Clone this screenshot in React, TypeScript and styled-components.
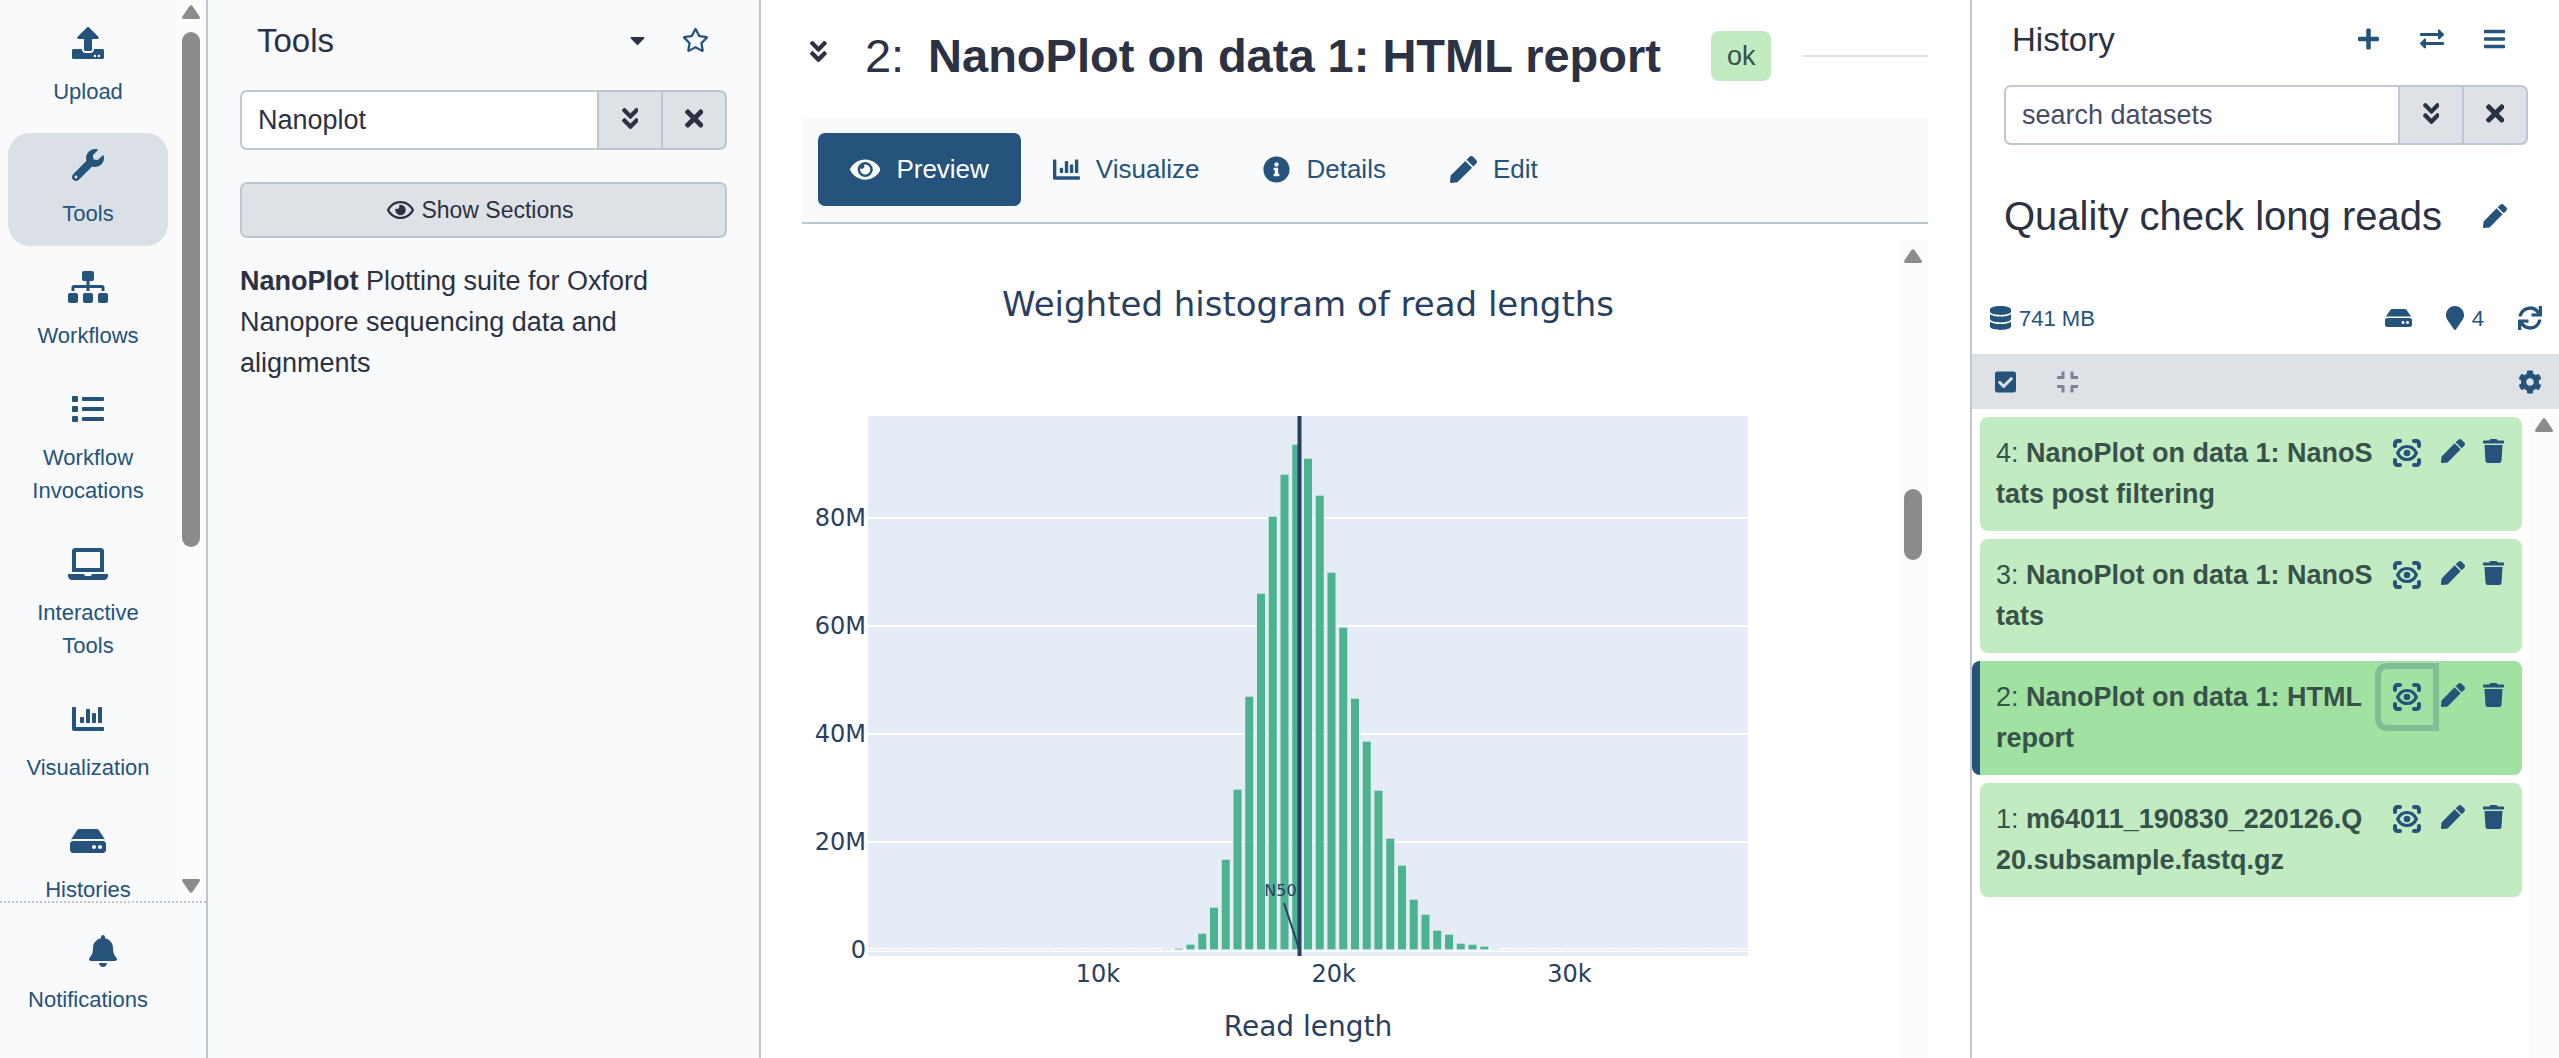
import React from "react";
import styled, { createGlobalStyle, css } from "styled-components";
import {
  FaAngleDoubleDown,
  FaBars,
  FaBell,
  FaCaretDown,
  FaChartBar,
  FaCheckSquare,
  FaCog,
  FaCompress,
  FaDatabase,
  FaExchangeAlt,
  FaEye,
  FaHdd,
  FaInfoCircle,
  FaLaptop,
  FaList,
  FaMapMarker,
  FaPen,
  FaPlus,
  FaRegEye,
  FaRegStar,
  FaSitemap,
  FaSync,
  FaTimes,
  FaTrash,
  FaUpload,
  FaWrench,
} from "react-icons/fa";

const color = {
  primary: "#25537b",
  text: "#2c3143",
  muted: "#454d6b",
  disabled: "#7b8299",
  panel: "#f8fafc",
  border: "#bdc6d1",
  grey: "#dee2e6",
  activeItem: "#dbe0e7",
  ok: "#c2ebc2",
  okActive: "#a1e1a1",
  okText: "#38524b",
  thumb: "#8b8b8b",
  track: "#fcfcfc",
  plot: "#e5ecf6",
  plotInk: "#2a3f5f",
  bar: "#4cb391",
};

const GlobalStyle = createGlobalStyle`
  *, *::before, *::after { box-sizing: border-box; }
  body {
    margin: 0;
    background: #fff;
    color: ${color.text};
    font-family: "Liberation Sans", Arial, sans-serif;
    font-size: 27px;
    line-height: 41px;
  }
  h1, h2, h3, p, ul, ol { margin: 0; padding: 0; font-weight: 400; }
  ul, ol { list-style: none; }
  button, input { font: inherit; color: inherit; }
  button { border: 0; background: none; padding: 0; cursor: pointer; }
  a { color: inherit; text-decoration: none; }
`;

/* $units is the width of the glyph's drawing on its 512-unit-high grid */
const Glyph = styled.span<{ $size?: number; $units?: number }>`
  display: inline-flex;
  flex: none;
  font-size: ${(p) => p.$size ?? 24}px;
  line-height: 1;
  svg {
    width: ${(p) => (p.$units ?? 512) / 512}em;
    height: 1em;
  }
`;

const Shell = styled.div`
  display: grid;
  grid-template-columns: 208px 553px minmax(0, 1fr) 589px;
  grid-template-rows: minmax(0, 1fr);
  height: 100vh;
  overflow: hidden;
`;

/* ---------- scroll bars ---------- */

const Track = styled.div<{ $top: number }>`
  display: flex;
  flex-direction: column;
  align-items: center;
  flex: none;
  width: 30px;
  padding: ${(p) => p.$top}px 0 8px;
  background: ${color.track};
`;

const Thumb = styled.div<{ $offset: number; $length: number }>`
  width: 18px;
  height: ${(p) => p.$length}px;
  margin-top: ${(p) => p.$offset}px;
  border-radius: 9px;
  background: ${color.thumb};
`;

const ArrowSvg = styled.svg<{ $down?: boolean }>`
  flex: none;
  width: 18px;
  height: 14px;
  ${(p) =>
    p.$down &&
    css`
      margin-top: auto;
      transform: rotate(180deg);
    `}
`;

const Arrow = ({ down }: { down?: boolean }) => (
  <ArrowSvg viewBox="0 0 18 14" $down={down} aria-hidden="true">
    <path
      d="M7.4 1.2Q9-.8 10.6 1.2L17.6 11.4Q18.6 14 16.4 14H1.6Q-.6 14 .4 11.4Z"
      fill={color.thumb}
    />
  </ArrowSvg>
);

/* ---------- activity bar ---------- */

const ActivityBar = styled.nav`
  display: flex;
  flex-direction: column;
  min-height: 0;
  background: ${color.panel};
  border-right: 2px solid ${color.border};
`;

const ActivityScroll = styled.div`
  display: flex;
  flex: 1;
  min-height: 0;
  overflow: hidden;
`;

const ActivityList = styled.ul`
  display: flex;
  flex: 1;
  flex-direction: column;
  gap: 9px;
  min-width: 0;
  padding: 11px 8px 0;
`;

const Activity = styled.button<{ $active?: boolean }>`
  display: flex;
  flex-direction: column;
  align-items: center;
  gap: 16px;
  width: 100%;
  padding: 16px 12px;
  border-radius: 22px;
  background: ${(p) => (p.$active ? color.activeItem : "transparent")};
  color: ${color.primary};
  font-size: 22px;
  line-height: 33px;
`;

const ActivityFooter = styled.div`
  display: flex;
  flex: none;
  flex-direction: column;
  height: 157px;
  padding-top: 16px;
  border-top: 2px dotted ${color.border};
`;

const FooterActivity = styled(Activity)`
  padding: 16px 0;
`;

const FooterLabel = styled.span`
  align-self: flex-start;
  width: 176px;
  text-align: center;
`;

const activities = [
  { label: "Upload", icon: <FaUpload />, units: 512 },
  { label: "Tools", icon: <FaWrench />, units: 512, active: true },
  { label: "Workflows", icon: <FaSitemap />, units: 640 },
  { label: "Workflow Invocations", icon: <FaList />, units: 512 },
  { label: "Interactive Tools", icon: <FaLaptop />, units: 640 },
  { label: "Visualization", icon: <FaChartBar />, units: 512 },
  { label: "Histories", icon: <FaHdd />, units: 576 },
];

/* ---------- shared panel parts ---------- */

const PanelHeader = styled.header<{ $height: number }>`
  display: flex;
  align-items: center;
  height: ${(p) => p.$height}px;
`;

const PanelHeading = styled.h2`
  flex: 1;
  font-size: 33px;
`;

const IconButton = styled.button<{ $width: number; $tone?: string }>`
  display: flex;
  align-items: center;
  justify-content: center;
  width: ${(p) => p.$width}px;
  height: 56px;
  color: ${(p) => p.$tone ?? color.primary};
`;

const SearchGroup = styled.div`
  display: flex;
  height: 60px;
  border: 2px solid ${color.border};
  border-radius: 7px;
  background: ${color.grey};
  overflow: hidden;
`;

const SearchInput = styled.input`
  flex: 1;
  min-width: 0;
  padding: 0 16px;
  border: 0;
  outline: 0;
  background: #fff;
  &::placeholder {
    color: ${color.muted};
    opacity: 1;
  }
`;

const SearchButton = styled.button`
  display: flex;
  align-items: center;
  justify-content: center;
  width: 64px;
  border-left: 2px solid ${color.border};
  padding-bottom: 4px;
`;

const SearchBox = (props: {
  label: string;
  value?: string;
  placeholder?: string;
}) => (
  <SearchGroup role="search">
    <SearchInput
      type="text"
      aria-label={props.label}
      defaultValue={props.value}
      placeholder={props.placeholder}
    />
    <SearchButton aria-label="Advanced search">
      <Glyph $size={27} $units={320}>
        <FaAngleDoubleDown />
      </Glyph>
    </SearchButton>
    <SearchButton aria-label="Clear search">
      <Glyph $size={27} $units={352}>
        <FaTimes />
      </Glyph>
    </SearchButton>
  </SearchGroup>
);

/* ---------- tool panel ---------- */

const ToolPanel = styled.aside`
  padding: 0 32px;
  background: ${color.panel};
  border-right: 2px solid ${color.border};
`;

const ToolHeader = styled(PanelHeader)`
  padding: 0 3px 0 17px;
  margin-bottom: 10px;
`;

const SectionsButton = styled.button`
  display: flex;
  align-items: center;
  justify-content: center;
  gap: 7px;
  width: 100%;
  height: 56px;
  margin-top: 32px;
  padding-right: 6px;
  border: 2px solid ${color.border};
  border-radius: 7px;
  background: ${color.grey};
  font-size: 23px;
`;

const ToolResult = styled.a`
  display: block;
  margin-top: 23px;
`;

/* ---------- centre ---------- */

const Center = styled.main`
  display: flex;
  flex-direction: column;
  min-width: 0;
  padding: 0 42px 0 41px;
`;

const DatasetHeader = styled.header`
  display: flex;
  align-items: center;
  height: 112px;
  margin-bottom: 5px;
  padding-left: 8px;
`;

const DatasetTitle = styled.h1`
  display: flex;
  gap: 24px;
  margin: 0 50px 0 38px;
  font-size: 47px;
  line-height: 56px;
  white-space: nowrap;
`;

const StateBadge = styled.span`
  padding: 5px 16px;
  height: 50px;
  border-radius: 8px;
  background: ${color.ok};
  color: ${color.okText};
`;

const Rule = styled.span`
  flex: 1;
  height: 2px;
  margin-left: 32px;
  background: ${color.grey};
`;

const Tabs = styled.nav`
  display: flex;
  padding: 16px;
  background: ${color.panel};
  border-bottom: 2px solid ${color.border};
`;

const Tab = styled.a<{ $active?: boolean }>`
  display: flex;
  align-items: center;
  gap: 16px;
  height: 73px;
  padding: 0 32px;
  border-radius: 7px;
  font-size: 26px;
  background: ${(p) => (p.$active ? color.primary : "transparent")};
  color: ${(p) => (p.$active ? "#fff" : color.primary)};
`;

const Report = styled.section`
  display: flex;
  flex: 1;
  min-height: 0;
  margin-top: 16px;
  overflow: hidden;
`;

const ReportBody = styled.div`
  flex: 1;
  min-width: 0;
  overflow: hidden;
`;

const ChartText = styled.text`
  fill: ${color.plotInk};
  font-family: "DejaVu Sans", Verdana, sans-serif;
`;

const plot = { left: 66, right: 946, top: 176, bottom: 716, zero: 710 };
const perMega = 5.4;
const xOf = (k: number) => 296 + (k - 10) * 23.57;

const firstBin = 25;
const binHeights = [
  1, 2, 6, 17, 43, 91, 161, 254, 357, 434, 476, 506, 492, 455, 378, 323, 252,
  209, 160, 112, 85, 51, 36, 20, 16, 7, 6, 4, 1,
];
const bins = Array.from({ length: 75 }, (_, i) => ({
  x: 360.3 + (i - firstBin) * 11.75,
  h: binHeights[i - firstBin] ?? 0,
}));

const Histogram = () => (
  <svg width="1096" height="818" viewBox="0 0 1096 818" role="img" aria-label="Weighted histogram of read lengths">
    <ChartText x="506" y="76" fontSize="34" textAnchor="middle">
      Weighted histogram of read lengths
    </ChartText>
    <rect
      x={plot.left}
      y={plot.top}
      width={plot.right - plot.left}
      height={plot.bottom - plot.top}
      fill={color.plot}
    />
    {[20, 40, 60, 80].map((m) => (
      <rect
        key={m}
        x={plot.left}
        y={Math.round(plot.zero - m * perMega) - 1}
        width={plot.right - plot.left}
        height="2"
        fill="#fff"
      />
    ))}
    <rect x={plot.left} y={plot.zero - 2} width={plot.right - plot.left} height="4" fill="#fff" />
    <svg x={plot.left} y={plot.top} width={880} height={540} viewBox={`${plot.left} ${plot.top} 880 540`}>
      {bins.map((b) => (
        <rect
          key={b.x}
          x={b.x}
          y={plot.zero - b.h}
          width="9.4"
          height={Math.max(b.h, 0.1)}
          fill={color.bar}
          fillOpacity={b.h ? 1 : 0}
          stroke={color.plot}
          strokeWidth="1.4"
        />
      ))}
      <rect x="495.5" y={plot.top} width="4" height="540" fill={color.plotInk} />
      <path d="M482 663L497.5 710" stroke={color.plotInk} strokeWidth="2" />
    </svg>
    <ChartText x="478.5" y="656" fontSize="16" textAnchor="middle">
      N50
    </ChartText>
    {[0, 20, 40, 60, 80].map((m) => (
      <ChartText key={m} x="64" y={plot.zero - m * perMega + 8} fontSize="24" textAnchor="end">
        {m ? `${m}M` : "0"}
      </ChartText>
    ))}
    {[10, 20, 30].map((k) => (
      <ChartText key={k} x={xOf(k)} y="742" fontSize="24" textAnchor="middle">
        {k}k
      </ChartText>
    ))}
    <ChartText x="506" y="796" fontSize="28" textAnchor="middle">
      Read length
    </ChartText>
  </svg>
);

/* ---------- history panel ---------- */

const HistoryPanel = styled.aside`
  display: flex;
  flex-direction: column;
  min-height: 0;
  border-left: 2px solid ${color.border};
  background: #fff;
`;

const HistoryTop = styled.div`
  padding: 0 31px 0 32px;
`;

const HistoryHeader = styled(PanelHeader)`
  padding: 0 2px 0 8px;
  margin-bottom: 7px;
`;

const HistoryTitle = styled.div`
  display: flex;
  align-items: center;
  justify-content: space-between;
  height: 60px;
  margin: 41px 0 36px;
`;

const HistoryName = styled.h3`
  font-size: 40px;
  line-height: 60px;
`;

const Stats = styled.div`
  display: flex;
  align-items: center;
  height: 72px;
  padding: 0 17px 0 18px;
  font-size: 22px;
`;

const Stat = styled.button`
  display: flex;
  align-items: center;
  gap: 8px;
  color: ${color.primary};
`;

const StatGroup = styled.div`
  display: flex;
  gap: 34px;
  margin-left: auto;
`;

const Operations = styled.div`
  display: flex;
  align-items: center;
  height: 55px;
  padding: 0 3px 0 6px;
  background: ${color.grey};
`;

const Spacer = styled.span`
  flex: 1;
`;

const HistoryBody = styled.div`
  display: flex;
  flex: 1;
  min-height: 0;
`;

const Items = styled.ol`
  display: flex;
  flex: 1;
  flex-direction: column;
  gap: 8px;
  min-width: 0;
  padding: 8px 7px 0 0;
`;

const Item = styled.li<{ $active?: boolean }>`
  display: flex;
  align-items: flex-start;
  min-height: 114px;
  padding: 8px 9px 8px 16px;
  border-radius: 8px;
  margin-left: 8px;
  background: ${color.ok};
  color: ${color.okText};
  ${(p) =>
    p.$active &&
    css`
      margin-left: 0;
      border-left: 8px solid ${color.primary};
      background: ${color.okActive};
    `}
`;

const ItemName = styled.p`
  flex: 1;
  min-width: 0;
  padding: 8px 0;
  margin-right: 5px;
  word-break: break-all;
`;

const ItemButton = styled.button<{ $wide?: boolean; $focused?: boolean }>`
  display: flex;
  align-items: center;
  justify-content: center;
  width: ${(p) => (p.$wide ? 52 : 40)}px;
  height: 56px;
  padding-bottom: ${(p) => (p.$wide ? 0 : 4)}px;
  color: ${color.primary};
  border-radius: ${(p) => (p.$wide ? "6px 0 0 6px" : "0")};
  box-shadow: ${(p) => (p.$focused ? "0 0 0 6px rgba(37, 83, 123, 0.25)" : "none")};
`;

const ScanEye = () => (
  <svg viewBox="0 0 28 28" fill="none" stroke="currentColor" strokeLinecap="round" strokeLinejoin="round">
    <path
      d="M2 7V4.5A2.5 2.5 0 0 1 4.5 2H7M21 2h2.5A2.5 2.5 0 0 1 26 4.5V7M26 21v2.5a2.5 2.5 0 0 1-2.5 2.5H21M7 26H4.5A2.5 2.5 0 0 1 2 23.5V21"
      strokeWidth="4"
    />
    <path
      d="M4.6 14C6.6 9.8 10 7.5 14 7.5S21.4 9.8 23.4 14C21.4 18.2 18 20.5 14 20.5S6.6 18.2 4.6 14Z"
      strokeWidth="3.2"
    />
    <circle cx="14" cy="14" r="3.3" fill="currentColor" stroke="none" />
  </svg>
);

const datasets = [
  { id: 4, name: "NanoPlot on data 1: NanoStats post filtering" },
  { id: 3, name: "NanoPlot on data 1: NanoStats" },
  { id: 2, name: "NanoPlot on data 1: HTML report", active: true },
  { id: 1, name: "m64011_190830_220126.Q20.subsample.fastq.gz" },
];

export default function App() {
  return (
    <>
      <GlobalStyle />
      <Shell>
        <ActivityBar aria-label="Activities">
          <ActivityScroll>
            <ActivityList>
              {activities.map((a) => (
                <li key={a.label}>
                  <Activity $active={a.active}>
                    <Glyph $size={32} $units={a.units}>
                      {a.icon}
                    </Glyph>
                    <span>{a.label}</span>
                  </Activity>
                </li>
              ))}
            </ActivityList>
            <Track $top={5}>
              <Arrow />
              <Thumb $offset={13} $length={515} />
              <Arrow down />
            </Track>
          </ActivityScroll>
          <ActivityFooter>
            <FooterActivity>
              <Glyph $size={32} $units={448}>
                <FaBell />
              </Glyph>
              <FooterLabel>Notifications</FooterLabel>
            </FooterActivity>
          </ActivityFooter>
        </ActivityBar>

        <ToolPanel>
          <ToolHeader $height={80}>
            <PanelHeading>Tools</PanelHeading>
            <IconButton $width={58} $tone={color.text} aria-label="Panel views">
              <Glyph $units={320}>
                <FaCaretDown />
              </Glyph>
            </IconButton>
            <IconButton $width={58} aria-label="Favorites">
              <Glyph $units={576}>
                <FaRegStar />
              </Glyph>
            </IconButton>
          </ToolHeader>
          <SearchBox label="Search tools" value="Nanoplot" />
          <SectionsButton>
            <Glyph $units={576}>
              <FaRegEye />
            </Glyph>
            Show Sections
          </SectionsButton>
          <ToolResult href="#nanoplot">
            <b>NanoPlot</b> Plotting suite for Oxford Nanopore sequencing data and alignments
          </ToolResult>
        </ToolPanel>

        <Center>
          <DatasetHeader>
            <button aria-label="Expand details">
              <Glyph $size={27} $units={320}>
                <FaAngleDoubleDown />
              </Glyph>
            </button>
            <DatasetTitle>
              <span>2:</span>
              <b>NanoPlot on data 1: HTML report</b>
            </DatasetTitle>
            <StateBadge>ok</StateBadge>
            <Rule />
          </DatasetHeader>
          <Tabs>
            <Tab href="#preview" $active>
              <Glyph $size={27} $units={576}>
                <FaEye />
              </Glyph>
              Preview
            </Tab>
            <Tab href="#visualize">
              <Glyph $size={27}>
                <FaChartBar />
              </Glyph>
              Visualize
            </Tab>
            <Tab href="#details">
              <Glyph $size={27}>
                <FaInfoCircle />
              </Glyph>
              Details
            </Tab>
            <Tab href="#edit">
              <Glyph $size={27}>
                <FaPen />
              </Glyph>
              Edit
            </Tab>
          </Tabs>
          <Report>
            <ReportBody>
              <Histogram />
            </ReportBody>
            <Track $top={9}>
              <Arrow />
              <Thumb $offset={226} $length={71} />
            </Track>
          </Report>
        </Center>

        <HistoryPanel>
          <HistoryTop>
            <HistoryHeader $height={78}>
              <PanelHeading>History</PanelHeading>
              <IconButton $width={63} aria-label="Create new history">
                <Glyph $units={448}>
                  <FaPlus />
                </Glyph>
              </IconButton>
              <IconButton $width={63} aria-label="Switch to history">
                <Glyph>
                  <FaExchangeAlt />
                </Glyph>
              </IconButton>
              <IconButton $width={63} aria-label="History options">
                <Glyph $units={448}>
                  <FaBars />
                </Glyph>
              </IconButton>
            </HistoryHeader>
            <SearchBox label="Search datasets" placeholder="search datasets" />
            <HistoryTitle>
              <HistoryName>Quality check long reads</HistoryName>
              <IconButton $width={66} aria-label="Edit history">
                <Glyph>
                  <FaPen />
                </Glyph>
              </IconButton>
            </HistoryTitle>
          </HistoryTop>
          <Stats>
            <Stat>
              <Glyph $units={448}>
                <FaDatabase />
              </Glyph>
              741 MB
            </Stat>
            <StatGroup>
              <Stat aria-label="Storage">
                <Glyph $units={576}>
                  <FaHdd />
                </Glyph>
              </Stat>
              <Stat>
                <Glyph $units={384}>
                  <FaMapMarker />
                </Glyph>
                4
              </Stat>
              <Stat aria-label="Refresh">
                <Glyph>
                  <FaSync />
                </Glyph>
              </Stat>
            </StatGroup>
          </Stats>
          <Operations>
            <IconButton $width={54} aria-label="Select items">
              <Glyph $units={448}>
                <FaCheckSquare />
              </Glyph>
            </IconButton>
            <IconButton $width={70} $tone={color.disabled} aria-label="Collapse all">
              <Glyph $units={448}>
                <FaCompress />
              </Glyph>
            </IconButton>
            <Spacer />
            <IconButton $width={52} aria-label="Settings">
              <Glyph>
                <FaCog />
              </Glyph>
            </IconButton>
          </Operations>
          <HistoryBody>
            <Items>
              {datasets.map((d) => (
                <Item key={d.id} $active={d.active}>
                  <ItemName>
                    {d.id}: <b>{d.name}</b>
                  </ItemName>
                  <ItemButton $wide $focused={d.active} aria-label="View">
                    <Glyph $size={28}>
                      <ScanEye />
                    </Glyph>
                  </ItemButton>
                  <ItemButton aria-label="Edit attributes">
                    <Glyph>
                      <FaPen />
                    </Glyph>
                  </ItemButton>
                  <ItemButton aria-label="Delete">
                    <Glyph $units={448}>
                      <FaTrash />
                    </Glyph>
                  </ItemButton>
                </Item>
              ))}
            </Items>
            <Track $top={9}>
              <Arrow />
            </Track>
          </HistoryBody>
        </HistoryPanel>
      </Shell>
    </>
  );
}
